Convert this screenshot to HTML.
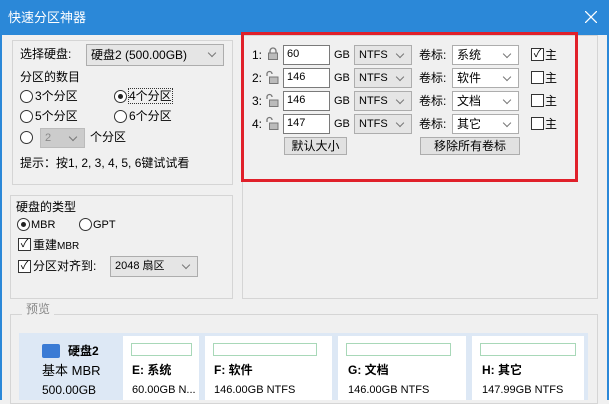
<!DOCTYPE html>
<html><head><meta charset="utf-8"><style>
*{margin:0;padding:0;box-sizing:border-box}
body{width:609px;height:400px;overflow:hidden;background:#f0f0f0;font-family:"Liberation Sans","Noto Sans CJK SC",sans-serif;font-size:12px;color:#000;position:relative}
.a{position:absolute;white-space:nowrap;line-height:14px}
.title{position:absolute;left:0;top:0;width:609px;height:35px;background:#2b88d8;color:#fff;font-size:13px}
.gb{position:absolute;border:1px solid #d5d5d5}
.cmb{position:absolute;background:#e5e5e5;border:1px solid #adadad;padding-left:4px;line-height:18px;font-size:11px}
.cmb:after{content:"";position:absolute;right:8px;top:5px;width:5px;height:5px;border-right:1px solid #777;border-bottom:1px solid #777;transform:rotate(45deg)}
.cmbw{background:#fff}
.inp{position:absolute;background:#fff;border:1px solid #7a7a7a;padding-left:3px;line-height:17px;font-size:11px}
.rad{position:absolute;width:13px;height:13px;border:1px solid #333;border-radius:50%;background:#fff}
.rad.on:after{content:"";position:absolute;left:3px;top:3px;width:5px;height:5px;border-radius:50%;background:#222}
.chk{position:absolute;width:13px;height:13px;border:1px solid #333;background:#fff;font-size:11px;line-height:11px;text-align:center}
.btn{position:absolute;background:#e1e1e1;border:1px solid #adadad;text-align:center;line-height:16px}
.card{position:absolute;top:336px;height:64px;background:#fff}
.bar{position:absolute;top:7px;left:15px;right:15px;height:13px;border:1px solid #a8d8b8}
.lk{position:absolute}
</style></head><body>
<div class="title"><span class="a" style="left:8px;top:11px;font-size:13px">快速分区神器</span>
<svg style="position:absolute;left:585px;top:11px" width="12" height="12"><path d="M0 0L12 12M12 0L0 12" stroke="#fff" stroke-width="1.3"/></svg></div>
<div style="position:absolute;left:0;top:35px;width:2px;height:365px;background:#2b88d8"></div>
<div style="position:absolute;left:607px;top:35px;width:2px;height:365px;background:#2b88d8"></div>

<div class="gb" style="left:12px;top:40px;width:221px;height:145px"></div>
<span class="a" style="left:20px;top:47px">选择硬盘:</span>
<div class="cmb" style="left:86px;top:44px;width:138px;height:22px;line-height:20px;font-size:12px">硬盘2 (500.00GB)</div>
<span class="a" style="left:20px;top:70px">分区的数目</span>
<div class="rad" style="left:20px;top:90px"></div><span class="a" style="left:35px;top:89px">3个分区</span>
<div class="rad on" style="left:114px;top:90px"></div><span class="a" style="left:129px;top:89px;outline:1px dotted #333">4个分区</span>
<div class="rad" style="left:20px;top:110px"></div><span class="a" style="left:35px;top:109px">5个分区</span>
<div class="rad" style="left:114px;top:110px"></div><span class="a" style="left:129px;top:109px">6个分区</span>
<div class="rad" style="left:20px;top:131px"></div>
<div class="cmb" style="left:40px;top:128px;width:45px;height:20px;background:#ccc;border-color:#bbb;color:#888">2</div>
<span class="a" style="left:90px;top:130px">个分区</span>
<span class="a" style="left:20px;top:156px">提示：按1, 2, 3, 4, 5, 6键试试看</span>

<div class="gb" style="left:10px;top:195px;width:223px;height:104px"></div>
<span class="a" style="left:16px;top:200px">硬盘的类型</span>
<div class="rad on" style="left:17px;top:218px"></div><span class="a" style="left:31px;top:218px;font-size:11px">MBR</span>
<div class="rad" style="left:79px;top:218px"></div><span class="a" style="left:93px;top:218px;font-size:11px">GPT</span>
<div class="chk" style="left:18px;top:238px">✓</div><span class="a" style="left:33px;top:238px">重建<span style="font-size:10px">MBR</span></span>
<div class="chk" style="left:18px;top:260px">✓</div><span class="a" style="left:33px;top:259px">分区对齐到:</span>
<div class="cmb" style="left:110px;top:256px;width:88px;height:21px">2048 扇区</div>

<div class="gb" style="left:242px;top:35px;width:356px;height:264px"></div>
<div style="position:absolute;left:241px;top:32px;width:337px;height:150px;border:3px solid #e0202a"></div>

<span class="a" style="left:252px;top:48px">1:</span>
<svg class="lk" style="left:267px;top:47px" width="12" height="13"><path d="M3 6V4a3 3 0 0 1 6 0v2" fill="none" stroke="#777" stroke-width="1.3"/><rect x="1.5" y="6" width="9" height="6.5" fill="#bbb" stroke="#777"/></svg>
<div class="inp" style="left:283px;top:45px;width:47px;height:20px">60</div><span class="a" style="left:334px;top:48px;font-size:11px">GB</span>
<div class="cmb" style="left:354px;top:45px;width:58px;height:20px">NTFS</div><span class="a" style="left:419px;top:48px">卷标:</span>
<div class="cmb cmbw" style="left:452px;top:45px;width:67px;height:20px;font-size:12px">系统</div>
<div class="chk" style="left:531px;top:48px">✓</div><span class="a" style="left:545px;top:48px">主</span>

<span class="a" style="left:252px;top:71px">2:</span>
<svg class="lk" style="left:265px;top:70px" width="14" height="14"><path d="M2 6V4a2.5 2.5 0 0 1 5 0" fill="none" stroke="#777" stroke-width="1.3"/><rect x="4.5" y="7" width="8.5" height="6.5" fill="#bbb" stroke="#777"/></svg>
<div class="inp" style="left:283px;top:68px;width:47px;height:20px">146</div><span class="a" style="left:334px;top:71px;font-size:11px">GB</span>
<div class="cmb" style="left:354px;top:68px;width:58px;height:20px">NTFS</div><span class="a" style="left:419px;top:71px">卷标:</span>
<div class="cmb cmbw" style="left:452px;top:68px;width:67px;height:20px;font-size:12px">软件</div>
<div class="chk" style="left:531px;top:71px"></div><span class="a" style="left:545px;top:71px">主</span>

<span class="a" style="left:252px;top:94px">3:</span>
<svg class="lk" style="left:265px;top:93px" width="14" height="14"><path d="M2 6V4a2.5 2.5 0 0 1 5 0" fill="none" stroke="#777" stroke-width="1.3"/><rect x="4.5" y="7" width="8.5" height="6.5" fill="#bbb" stroke="#777"/></svg>
<div class="inp" style="left:283px;top:91px;width:47px;height:20px">146</div><span class="a" style="left:334px;top:94px;font-size:11px">GB</span>
<div class="cmb" style="left:354px;top:91px;width:58px;height:20px">NTFS</div><span class="a" style="left:419px;top:94px">卷标:</span>
<div class="cmb cmbw" style="left:452px;top:91px;width:67px;height:20px;font-size:12px">文档</div>
<div class="chk" style="left:531px;top:94px"></div><span class="a" style="left:545px;top:94px">主</span>

<span class="a" style="left:252px;top:117px">4:</span>
<svg class="lk" style="left:265px;top:116px" width="14" height="14"><path d="M2 6V4a2.5 2.5 0 0 1 5 0" fill="none" stroke="#777" stroke-width="1.3"/><rect x="4.5" y="7" width="8.5" height="6.5" fill="#bbb" stroke="#777"/></svg>
<div class="inp" style="left:283px;top:114px;width:47px;height:20px">147</div><span class="a" style="left:334px;top:117px;font-size:11px">GB</span>
<div class="cmb" style="left:354px;top:114px;width:58px;height:20px">NTFS</div><span class="a" style="left:419px;top:117px">卷标:</span>
<div class="cmb cmbw" style="left:452px;top:114px;width:67px;height:20px;font-size:12px">其它</div>
<div class="chk" style="left:531px;top:117px"></div><span class="a" style="left:545px;top:117px">主</span>

<div class="btn" style="left:284px;top:137px;width:63px;height:18px">默认大小</div>
<div class="btn" style="left:420px;top:137px;width:100px;height:18px">移除所有卷标</div>

<div class="gb" style="left:10px;top:314px;width:588px;height:90px"></div>
<span class="a" style="left:22px;top:302px;background:#f0f0f0;color:#888;padding:0 4px">预览</span>
<div style="position:absolute;left:19px;top:333px;width:569px;height:67px;background:#dde8f5"></div>
<div style="position:absolute;left:42px;top:344px;width:18px;height:14px;background:#3a7bd5;border-radius:2px"></div>
<span class="a" style="left:68px;top:344px;font-weight:bold">硬盘2</span>
<span class="a" style="left:42px;top:364px;font-size:13px">基本 MBR</span>
<span class="a" style="left:42px;top:383px">500.00GB</span>
<div class="card" style="left:123px;width:76px"><div class="bar" style="left:8px;right:7px"></div><span class="a" style="left:9px;top:27px;font-weight:bold">E: 系统</span><span class="a" style="left:9px;top:47px;font-size:11px">60.00GB N...</span></div>
<div class="card" style="left:205px;width:127px"><div class="bar" style="left:8px"></div><span class="a" style="left:9px;top:27px;font-weight:bold">F: 软件</span><span class="a" style="left:9px;top:47px;font-size:11px">146.00GB NTFS</span></div>
<div class="card" style="left:338px;width:128px"><div class="bar" style="left:8px"></div><span class="a" style="left:10px;top:27px;font-weight:bold">G: 文档</span><span class="a" style="left:10px;top:47px;font-size:11px">146.00GB NTFS</span></div>
<div class="card" style="left:472px;width:112px"><div class="bar" style="left:8px;right:8px"></div><span class="a" style="left:10px;top:27px;font-weight:bold">H: 其它</span><span class="a" style="left:10px;top:47px;font-size:11px">147.99GB NTFS</span></div>
</body></html>
